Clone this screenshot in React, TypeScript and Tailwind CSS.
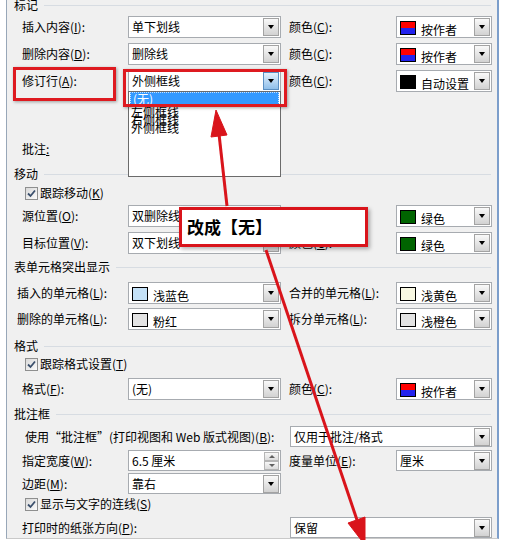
import React from "react";

function K({ k }: { k: string }) {
  return (
    <>
      (<span className="underline underline-offset-1">{k}</span>)
    </>
  );
}

function Tri() {
  return <div className="h-0 w-0 border-x-[3.5px] border-t-[4px] border-x-transparent border-t-black" />;
}

function DropBtn({ hot }: { hot?: boolean }) {
  return (
    <div
      className={`ml-auto mr-px flex h-[18px] w-[16px] shrink-0 items-center justify-center border ${
        hot
          ? "border-[#5b8fc2] bg-linear-to-b from-[#e3f0fc] to-[#8fbfea]"
          : "border-[#a3a3a3] bg-linear-to-b from-[#f9f9f9] to-[#d2d2d2]"
      }`}
    >
      <Tri />
    </div>
  );
}

function Combo({
  w,
  children,
  hot,
  drop,
}: {
  w: string;
  children: React.ReactNode;
  hot?: boolean;
  drop?: React.ReactNode;
}) {
  return (
    <div className={`relative flex h-full shrink-0 items-center border border-[#a7abb0] bg-white ${w}`}>
      {children}
      <DropBtn hot={hot} />
      {drop}
    </div>
  );
}

function Txt({ t }: { t: string }) {
  return <span className="pl-[3px] whitespace-nowrap">{t}</span>;
}

function Swatch({ c }: { c: string }) {
  if (c === "author")
    return (
      <div className="ml-[3px] mt-[2px] flex h-[14px] w-[16px] shrink-0 flex-col border border-black">
        <div className="flex-1 bg-[#ff0000]" />
        <div className="flex-1 bg-[#2222ee]" />
      </div>
    );
  return <div className={`ml-[3px] mt-[2px] h-[14px] w-[16px] shrink-0 border border-black ${c}`} />;
}

function ColorCombo({ w, c, t }: { w: string; c: string; t: string }) {
  return (
    <Combo w={w}>
      <Swatch c={c} />
      <span className="ml-[5px] mt-[6px] whitespace-nowrap">{t}</span>
    </Combo>
  );
}

function Section({ title, className }: { title: string; className: string }) {
  return (
    <div className={`flex h-[14px] items-center pl-[7px] ${className}`}>
      <span className="whitespace-nowrap">{title}</span>
      <div className="mx-[6px] h-px flex-1 bg-[#d7dce2]" />
    </div>
  );
}

function Check({ label, className }: { label: React.ReactNode; className: string }) {
  return (
    <div className={`flex h-[16px] items-center pl-[18px] ${className}`}>
      <div className="flex h-[13px] w-[13px] shrink-0 items-center justify-center border border-[#8e8f8f] bg-linear-to-br from-[#d9d9d9] to-[#fbfbfb]">
        <svg width="9" height="9" viewBox="0 0 9 9">
          <path d="M1 4.5 L3.5 7 L8 1.5" fill="none" stroke="#3a4f6c" strokeWidth="1.8" />
        </svg>
      </div>
      <span className="ml-[2px] whitespace-nowrap">{label}</span>
    </div>
  );
}

function SpinBtn({ up }: { up?: boolean }) {
  return (
    <div className="flex h-[9px] w-[15px] items-center justify-center border border-[#b5b5b5] bg-linear-to-b from-[#f7f7f7] to-[#dcdcdc]">
      <div
        className={`h-0 w-0 border-x-[3px] border-x-transparent ${
          up ? "border-b-[3px] border-b-[#606060]" : "border-t-[3px] border-t-[#606060]"
        }`}
      />
    </div>
  );
}

const DropList = (
  <div className="absolute left-[-1px] top-[20px] z-10 h-[86px] w-[153px] border border-[#6b6b6b] bg-white">
    <div className="mx-px h-[13px] bg-[#3399ff] pl-[3px] leading-[13px] text-white outline-1 outline-dotted outline-[#c9e3ff] -outline-offset-1">
      (无)
    </div>
    <div className="pl-[2px] pt-[3px] leading-[8px]">
      <div>左侧框线</div>
      <div>右侧框线</div>
      <div>外侧框线</div>
    </div>
  </div>
);

export default function App() {
  return (
    <div className="relative h-[540px] w-[508px] overflow-hidden bg-white font-['Noto_Sans_CJK_SC',sans-serif] text-[12px] leading-[14px] text-black">
      <div className="ml-[6px] flex h-[539px] w-[493px] flex-col border-b border-l border-r-2 border-b-[#c9c9c9] border-l-[#98a7b8] border-r-[#7c9ecb] bg-[#f0f0f0]">
        {/* 标记 */}
        <Section title="标记" className="mt-[-2px]" />
        <div className="mt-[4px] flex h-[22px] items-center pl-[15px]">
          <span className="w-[106px] shrink-0">插入内容<K k="I" />:</span>
          <Combo w="w-[153px]"><Txt t="单下划线" /></Combo>
          <span className="ml-[8px] w-[107px] shrink-0">颜色<K k="C" />:</span>
          <ColorCombo w="w-[96px]" c="author" t="按作者" />
        </div>
        <div className="mt-[5px] flex h-[22px] items-center pl-[15px]">
          <span className="w-[106px] shrink-0">删除内容<K k="D" />:</span>
          <Combo w="w-[153px]"><Txt t="删除线" /></Combo>
          <span className="ml-[8px] w-[107px] shrink-0">颜色<K k="C" />:</span>
          <ColorCombo w="w-[96px]" c="author" t="按作者" />
        </div>
        <div className="mt-[5px] flex h-[22px] items-center pl-[15px]">
          <span className="w-[106px] shrink-0">修订行<K k="A" />:</span>
          <Combo w="w-[153px]" hot drop={DropList}><Txt t="外侧框线" /></Combo>
          <span className="ml-[8px] w-[107px] shrink-0">颜色<K k="C" />:</span>
          <ColorCombo w="w-[96px]" c="bg-black" t="自动设置" />
        </div>
        <div className="mt-[46px] flex h-[22px] items-center pl-[15px]">
          <span>批注<span className="underline">:</span></span>
        </div>

        {/* 移动 */}
        <Section title="移动" className="mt-[7px]" />
        <Check className="mt-[4px]" label={<>跟踪移动<K k="K" /></>} />
        <div className="mt-[4px] flex h-[22px] items-center pl-[15px]">
          <span className="w-[106px] shrink-0">源位置<K k="O" />:</span>
          <Combo w="w-[153px]"><Txt t="双删除线" /></Combo>
          <span className="ml-[8px] w-[107px] shrink-0">颜色<K k="C" />:</span>
          <ColorCombo w="w-[96px]" c="bg-[#006400]" t="绿色" />
        </div>
        <div className="mt-[5px] flex h-[22px] items-center pl-[15px]">
          <span className="w-[106px] shrink-0">目标位置<K k="V" />:</span>
          <Combo w="w-[153px]"><Txt t="双下划线" /></Combo>
          <span className="ml-[8px] w-[107px] shrink-0">颜色<K k="C" />:</span>
          <ColorCombo w="w-[96px]" c="bg-[#006400]" t="绿色" />
        </div>

        {/* 表单元格突出显示 */}
        <Section title="表单元格突出显示" className="mt-[6px]" />
        <div className="mt-[8px] flex h-[22px] items-center pl-[10px]">
          <span className="w-[111px] shrink-0">插入的单元格<K k="L" />:</span>
          <ColorCombo w="w-[153px]" c="bg-[#c4e1f7]" t="浅蓝色" />
          <span className="ml-[8px] w-[107px] shrink-0">合并的单元格<K k="L" />:</span>
          <ColorCombo w="w-[96px]" c="bg-[#f7f7e2]" t="浅黄色" />
        </div>
        <div className="mt-[4px] flex h-[22px] items-center pl-[10px]">
          <span className="w-[111px] shrink-0">删除的单元格<K k="L" />:</span>
          <ColorCombo w="w-[153px]" c="bg-[#e3e3e3]" t="粉红" />
          <span className="ml-[8px] w-[107px] shrink-0">拆分单元格<K k="L" />:</span>
          <ColorCombo w="w-[96px]" c="bg-[#e3e3e3]" t="浅橙色" />
        </div>

        {/* 格式 */}
        <Section title="格式" className="mt-[9px]" />
        <Check className="mt-[3px]" label={<>跟踪格式设置<K k="T" /></>} />
        <div className="mt-[6px] flex h-[22px] items-center pl-[15px]">
          <span className="w-[106px] shrink-0">格式<K k="F" />:</span>
          <Combo w="w-[153px]"><Txt t="(无)" /></Combo>
          <span className="ml-[8px] w-[107px] shrink-0">颜色<K k="C" />:</span>
          <ColorCombo w="w-[96px]" c="author" t="按作者" />
        </div>

        {/* 批注框 */}
        <Section title="批注框" className="mt-[7px]" />
        <div className="mt-[5px] flex h-[21px] items-center pl-[18px]">
          <span className="w-[265px] shrink-0 whitespace-nowrap">使用“批注框”(打印视图和 Web 版式视图)<K k="B" />:</span>
          <Combo w="w-[202px]"><Txt t="仅用于批注/格式" /></Combo>
        </div>
        <div className="mt-[3px] flex h-[21px] items-center pl-[15px]">
          <span className="w-[106px] shrink-0">指定宽度<K k="W" />:</span>
          <div className="flex h-full w-[153px] shrink-0 items-center border border-[#a7abb0] bg-white">
            <span className="pl-[3px] whitespace-nowrap">6.5 厘米</span>
            <div className="ml-auto mr-px flex flex-col">
              <SpinBtn up />
              <SpinBtn />
            </div>
          </div>
          <span className="ml-[8px] w-[107px] shrink-0">度量单位<K k="E" />:</span>
          <Combo w="w-[96px]"><Txt t="厘米" /></Combo>
        </div>
        <div className="mt-[2px] flex h-[21px] items-center pl-[15px]">
          <span className="w-[106px] shrink-0">边距<K k="M" />:</span>
          <Combo w="w-[153px]"><Txt t="靠右" /></Combo>
        </div>
        <Check className="mt-[2px]" label={<>显示与文字的连线<K k="S" /></>} />
        <div className="mt-[5px] flex h-[21px] items-center pl-[15px]">
          <span className="w-[268px] shrink-0">打印时的纸张方向<K k="P" />:</span>
          <Combo w="w-[202px]"><Txt t="保留" /></Combo>
        </div>
      </div>

      {/* annotations */}
      <div className="absolute left-[13px] top-[67px] h-[34px] w-[103px] border-[3px] border-[#de1a20] shadow-[1px_1px_3px_rgba(0,0,0,0.35)]" />
      <div className="absolute left-[123px] top-[69px] z-20 h-[38px] w-[164px] border-[3px] border-[#de1a20] shadow-[1px_1px_3px_rgba(0,0,0,0.35)]" />
      <div className="absolute left-[179px] top-[207px] z-20 flex h-[40px] w-[189px] items-center border-[3px] border-[#d9141b] bg-white pl-[5px] text-[17px] font-semibold shadow-[2px_2px_4px_rgba(0,0,0,0.3)]">
        改成【无】
      </div>
      <svg className="pointer-events-none absolute inset-0 z-30" width="508" height="540" viewBox="0 0 508 540">
        <g fill="#d9141b" stroke="#d9141b">
          <line x1="227" y1="206" x2="219" y2="134" strokeWidth="3" />
          <polygon points="216,110 227,135 211,137" strokeWidth="1" />
          <line x1="266" y1="250" x2="357" y2="520" strokeWidth="3" />
          <polygon points="365,545 365,517 348,523" strokeWidth="1" />
        </g>
      </svg>
    </div>
  );
}
